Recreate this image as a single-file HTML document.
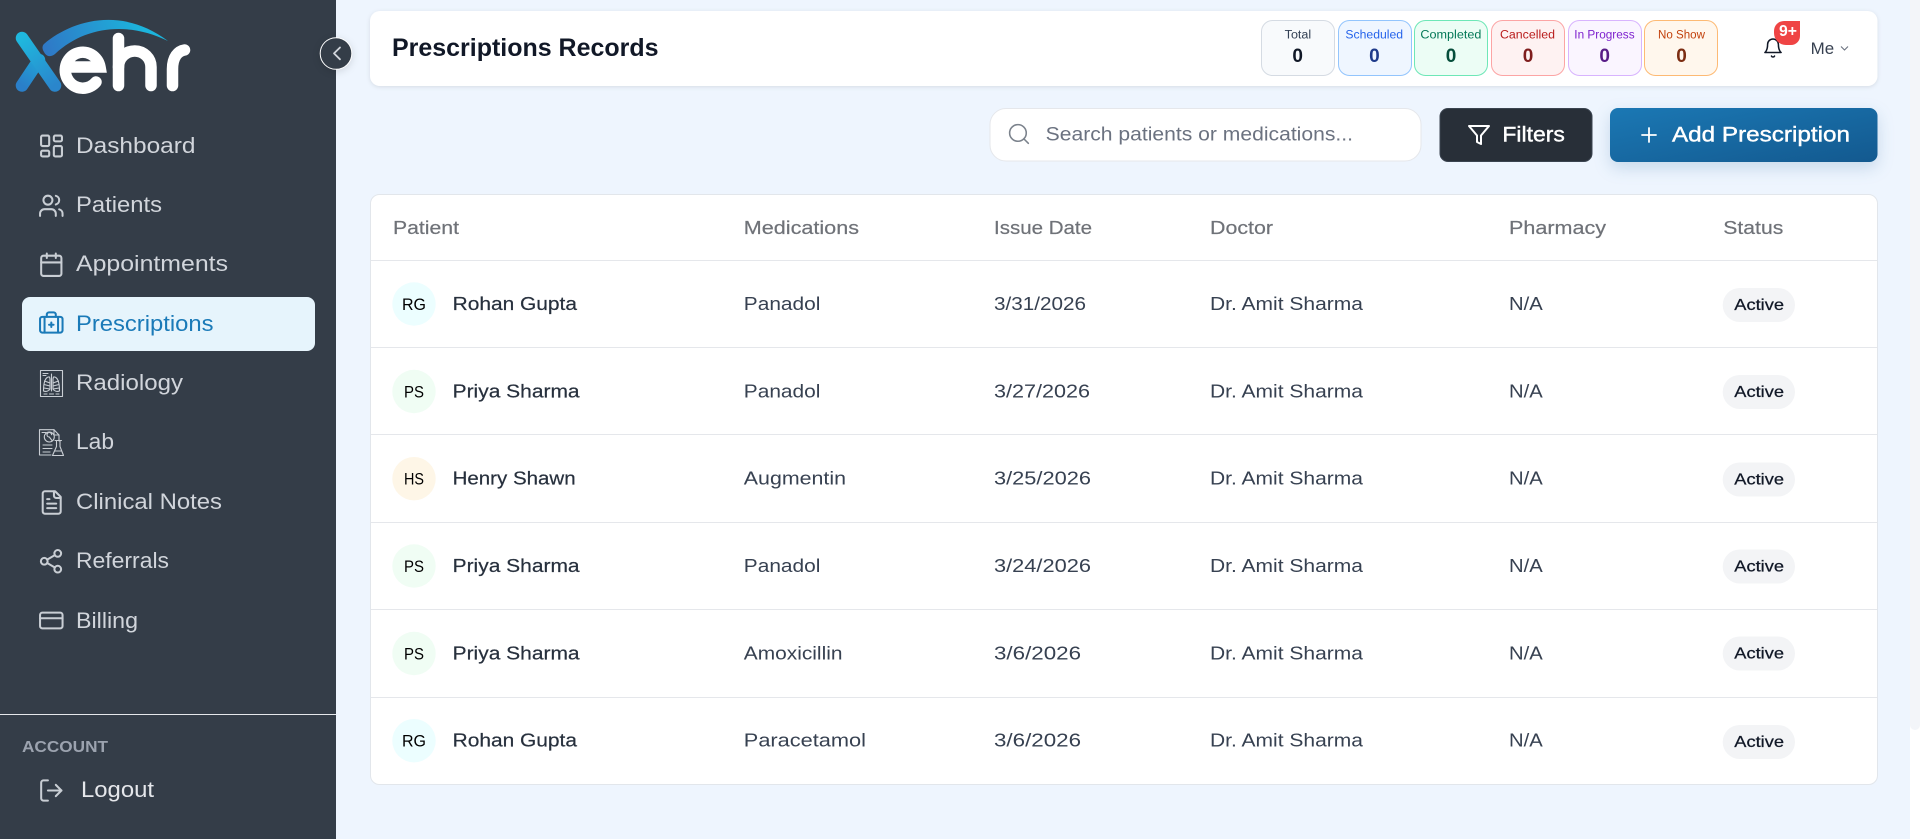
<!DOCTYPE html>
<html lang="en">
<head>
<meta charset="utf-8">
<title>Prescriptions Records</title>
<style>
html,body{margin:0;padding:0;width:1920px;height:839px;overflow:hidden;background:#EEF5FE}
svg{display:block}
text{font-family:"Liberation Sans",sans-serif}
.nav{font-size:22px;fill:#D1D5DB}
.th{font-size:18.5px;fill:#6F7278;stroke:#6F7278;stroke-width:.2px}
.td{font-size:18.5px;fill:#374151}
.nm{font-size:18.5px;fill:#27303D;stroke:#27303D;stroke-width:.2px}
.av{font-size:16.5px;fill:#000}
.ac{font-size:16px;fill:#111827;stroke:#111827;stroke-width:.25px}
.lb{font-size:11.5px}
.vl{font-size:19px;font-weight:700;text-anchor:middle}
.ic{fill:none;stroke:#C9CED4;stroke-width:1.8;stroke-linecap:round;stroke-linejoin:round}
.th-i{fill:none;stroke:#C9CED4;stroke-width:1.1;stroke-linecap:round;stroke-linejoin:round}
</style>
</head>
<body>
<svg xmlns="http://www.w3.org/2000/svg" width="1920" height="839" viewBox="0 0 1920 839">
<defs>
<linearGradient id="gB" gradientUnits="userSpaceOnUse" x1="22" y1="85" x2="40" y2="60"><stop offset="0" stop-color="#2A7FC9"/><stop offset="1" stop-color="#20A5D8"/></linearGradient>
<linearGradient id="gC" gradientUnits="userSpaceOnUse" x1="22" y1="38" x2="55" y2="85"><stop offset="0" stop-color="#1FB8DE"/><stop offset="1" stop-color="#2A86CC"/></linearGradient>
<linearGradient id="gD" gradientUnits="userSpaceOnUse" x1="45" y1="50" x2="140" y2="20"><stop offset="0" stop-color="#2F78C6"/><stop offset="1" stop-color="#1CB4DC"/></linearGradient>
<linearGradient id="gE" x1="0" y1="0" x2="1" y2="1"><stop offset="0" stop-color="#1B78B4"/><stop offset="1" stop-color="#13598F"/></linearGradient>
</defs>

<!-- background -->
<rect width="1920" height="839" fill="#EEF5FE"/>
<rect x="1910" width="10" height="839" fill="#fff"/>
<path d="M1910 0H1920V725a5 5 0 0 1-5 5a5 5 0 0 1-5-5Z" fill="#F3F5F9"/>

<!-- sidebar -->
<rect width="336" height="839" fill="#343D48"/>
<rect y="714" width="336" height="1" fill="#E5E7EB"/>

<!-- logo -->
<path d="M22 85.500 L39 60" stroke="url(#gB)" stroke-width="12.500" stroke-linecap="round" fill="none"/>
<path d="M22 38 L55 85.500" stroke="url(#gC)" stroke-width="12.500" stroke-linecap="round" fill="none"/>
<path d="M44 44C72 20 122 6 168 41C130 22 86 25 55 54C50 58 46 56 44 52C42 49 42 46 44 44Z" fill="url(#gD)"/>
<g fill="none" stroke="#fff" stroke-width="11.500" stroke-linecap="round">
<path d="M68 67H100A17.500 18 0 1 0 96 82"/>
<path d="M118.500 38.500V85.500"/>
<path d="M118.500 67A16.200 16 0 0 1 151 67V85.500"/>
<path d="M172.500 85.500V69C172.500 57 178 51 184.500 50"/>
</g>

<!-- toggle -->
<circle cx="336" cy="53.500" r="15.800" fill="#343D48" stroke="#fff" stroke-width="1" style="filter:drop-shadow(0 2px 4px rgba(0,0,0,.12))"/>
<polyline points="340,47.500 334,53.400 340,59.300" fill="none" stroke="#D1D5DB" stroke-width="1.800" stroke-linecap="round" stroke-linejoin="round"/>

<!-- nav active -->
<rect x="22" y="297" width="293" height="54" rx="8" fill="#E6F4FC"/>

<!-- nav icons -->
<g class="ic" transform="translate(37.600,132.100) scale(1.160)"><rect x="3" y="3" width="7" height="9" rx="1.300"/><rect x="14" y="3" width="7" height="5" rx="1.300"/><rect x="14" y="12" width="7" height="9" rx="1.300"/><rect x="3" y="16" width="7" height="5" rx="1.300"/></g>
<g class="ic" transform="translate(37.800,192.300) scale(1.125)"><path d="M16 21v-2a4 4 0 0 0-4-4H6a4 4 0 0 0-4 4v2"/><circle cx="9" cy="7" r="4"/><path d="M22 21v-2a4 4 0 0 0-3-3.870"/><path d="M16 3.130a4 4 0 0 1 0 7.750"/></g>
<g class="ic" transform="translate(37.800,251.200) scale(1.125)"><path d="M8 2v4"/><path d="M16 2v4"/><rect x="3" y="4" width="18" height="18" rx="2"/><path d="M3 10h18"/></g>
<g fill="none" stroke="#1A7AB8" stroke-width="1.800" stroke-linecap="round" stroke-linejoin="round" transform="translate(37.800,310.100) scale(1.125)"><path d="M12 11v4"/><path d="M14 13h-4"/><path d="M16 6V4a2 2 0 0 0-2-2h-4a2 2 0 0 0-2 2v2"/><path d="M18 6v14"/><path d="M6 6v14"/><rect x="2" y="6" width="20" height="14" rx="2"/></g>

<!-- radiology -->
<g class="th-i">
<rect x="40.500" y="370.500" width="22" height="26"/>
<path d="M43 373.500H48M43 375.500H46"/>
<path d="M51.500 374V391"/>
<path d="M49.500 377C46 376.500 43.500 381 43.500 391C46 392 49 391 50 389V379Z"/>
<path d="M53.500 377C57 376.500 59.500 381 59.500 391C57 392 54 391 53 389V379Z"/>
<path d="M44.500 381L50 383M44 384.500L50 386M43.800 388L50 389M58.500 381L53 383M59 384.500L53 386M59.200 388L53 389"/>
<path d="M44 394H47M49.500 394H53.500M56 394H59"/>
</g>

<!-- lab -->
<g class="th-i" stroke-width="1.300">
<path d="M59 441V435L54 429.700H39.500V455H51"/>
<path d="M54 429.700V435H59"/>
<path d="M42 432.500H46"/>
<circle cx="49.300" cy="437" r="5"/>
<path d="M49.300 437A2.300 2.300 0 1 1 51.600 434.700M49.300 437L52 440.500"/>
<path d="M43 445H52M43 448.500H52M43 452H50"/>
<path d="M55 440.500H61.500M56.500 440.500V446.500L52.500 455.500H63.500L60 446.500V440.500"/>
<path d="M54.500 451H61.500"/>
</g>

<g class="ic" transform="translate(38.200,489) scale(1.125)"><path d="M15 2H6a2 2 0 0 0-2 2v16a2 2 0 0 0 2 2h12a2 2 0 0 0 2-2V7Z"/><path d="M14 2v4a2 2 0 0 0 2 2h4"/><path d="M10 9H8"/><path d="M16 13H8"/><path d="M16 17H8"/></g>
<g class="ic" transform="translate(37.500,547.800) scale(1.125)"><circle cx="18" cy="5" r="3"/><circle cx="6" cy="12" r="3"/><circle cx="18" cy="19" r="3"/><line x1="8.590" y1="13.510" x2="15.420" y2="17.490"/><line x1="15.410" y1="6.510" x2="8.590" y2="10.490"/></g>
<g class="ic" transform="translate(37.800,607) scale(1.125)"><rect x="2" y="5" width="20" height="14" rx="2"/><line x1="2" y1="10" x2="22" y2="10"/></g>
<g class="ic" transform="translate(37.800,777) scale(1.125)"><path d="M9 21H5a2 2 0 0 1-2-2V5a2 2 0 0 1 2-2h4"/><polyline points="16 17 21 12 16 7"/><line x1="21" y1="12" x2="9" y2="12"/></g>

<!-- nav text -->
<text class="nav" x="76" y="153" textLength="119.500" lengthAdjust="spacingAndGlyphs">Dashboard</text>
<text class="nav" x="76" y="212" textLength="86" lengthAdjust="spacingAndGlyphs">Patients</text>
<text class="nav" x="76" y="271" textLength="152" lengthAdjust="spacingAndGlyphs">Appointments</text>
<text class="nav" x="76" y="331" textLength="137.500" lengthAdjust="spacingAndGlyphs" style="fill:#1A7AB8">Prescriptions</text>
<text class="nav" x="76" y="390" textLength="107" lengthAdjust="spacingAndGlyphs">Radiology</text>
<text class="nav" x="76" y="449" textLength="38" lengthAdjust="spacingAndGlyphs">Lab</text>
<text class="nav" x="76" y="509" textLength="146" lengthAdjust="spacingAndGlyphs">Clinical Notes</text>
<text class="nav" x="76" y="568" textLength="93" lengthAdjust="spacingAndGlyphs">Referrals</text>
<text class="nav" x="76" y="628" textLength="62" lengthAdjust="spacingAndGlyphs">Billing</text>
<text x="22" y="752" font-size="15.500" font-weight="700" fill="#9CA3AF" textLength="86" lengthAdjust="spacingAndGlyphs">ACCOUNT</text>
<text class="nav" x="81" y="797" textLength="73" lengthAdjust="spacingAndGlyphs" style="fill:#E5E7EB">Logout</text>

<!-- header card -->
<rect x="370" y="11" width="1507.500" height="75" rx="10" fill="#fff" style="filter:drop-shadow(0 1px 2px rgba(0,0,0,.1))"/>
<text x="392" y="56" font-size="25" font-weight="700" fill="#111827" textLength="266.500" lengthAdjust="spacingAndGlyphs">Prescriptions Records</text>

<!-- stat pills -->
<rect x="1261.500" y="20.500" width="73" height="55" rx="11" fill="#F8FAFC" stroke="#D5DBE3"/>
<rect x="1338.500" y="20.500" width="73" height="55" rx="11" fill="#EFF6FF" stroke="#93C5FD"/>
<rect x="1414.500" y="20.500" width="73" height="55" rx="11" fill="#ECFDF5" stroke="#6EE7B7"/>
<rect x="1491.500" y="20.500" width="73" height="55" rx="11" fill="#FEF2F2" stroke="#FCA5A5"/>
<rect x="1568.500" y="20.500" width="73" height="55" rx="11" fill="#FAF5FF" stroke="#D8B4FE"/>
<rect x="1644.500" y="20.500" width="73" height="55" rx="11" fill="#FFF7ED" stroke="#FDBA74"/>
<g class="lb">
<text class="lb" x="1284.700" y="38.500" fill="#334155" textLength="26.500" lengthAdjust="spacingAndGlyphs">Total</text>
<text class="lb" x="1345.400" y="38.500" fill="#2563EB" textLength="57.700" lengthAdjust="spacingAndGlyphs">Scheduled</text>
<text class="lb" x="1420.400" y="38.500" fill="#047857" textLength="61" lengthAdjust="spacingAndGlyphs">Completed</text>
<text class="lb" x="1500" y="38.500" fill="#B91C1C" textLength="55" lengthAdjust="spacingAndGlyphs">Cancelled</text>
<text class="lb" x="1574.300" y="38.500" fill="#7E22CE" textLength="60.300" lengthAdjust="spacingAndGlyphs">In Progress</text>
<text class="lb" x="1658" y="38.500" fill="#C2410C" textLength="47" lengthAdjust="spacingAndGlyphs">No Show</text>
</g>
<text class="vl" x="1297.700" y="62" fill="#111827">0</text>
<text class="vl" x="1374.400" y="62" fill="#1E3A8A">0</text>
<text class="vl" x="1451" y="62" fill="#064E3B">0</text>
<text class="vl" x="1528" y="62" fill="#7F1D1D">0</text>
<text class="vl" x="1604.700" y="62" fill="#581C87">0</text>
<text class="vl" x="1681.500" y="62" fill="#7C2D12">0</text>

<!-- bell -->
<g fill="none" stroke="#111827" stroke-width="1.700" stroke-linecap="round" stroke-linejoin="round" transform="translate(1762.200,37.200) scale(.9)"><path d="M6 8a6 6 0 0 1 12 0c0 7 3 9 3 9H3s3-2 3-9"/><path d="M10.300 21a1.940 1.940 0 0 0 3.400 0"/></g>
<path d="M1784 21H1800V36A9 9 0 0 1 1791 45H1786A12 12 0 0 1 1774 33V31A10 10 0 0 1 1784 21Z" fill="#EF4444"/>
<text x="1779" y="36" font-size="15.500" font-weight="700" fill="#fff" textLength="18" lengthAdjust="spacingAndGlyphs">9+</text>
<text x="1810.700" y="54" font-size="16.500" fill="#374151" textLength="23.500" lengthAdjust="spacingAndGlyphs">Me</text>
<polyline points="1841,46.500 1844.500,50 1848,46.500" fill="none" stroke="#6B7280" stroke-width="1.100"/>

<!-- search -->
<rect x="990" y="108.500" width="431" height="52.500" rx="16" fill="#fff" stroke="#E5E7EB"/>
<g fill="none" stroke="#7B828C" stroke-width="1.500" stroke-linecap="round" stroke-linejoin="round" transform="translate(1006.500,121.500) scale(1.040)"><circle cx="11" cy="11" r="8"/><path d="m21 21-4.300-4.300"/></g>
<text x="1045.700" y="140.500" font-size="19" fill="#6B7280" textLength="307.300" lengthAdjust="spacingAndGlyphs">Search patients or medications...</text>

<!-- filters -->
<rect x="1440" y="108.500" width="152" height="53" rx="8" fill="#282F38" stroke="#3B4450"/>
<g fill="none" stroke="#fff" stroke-width="2" stroke-linecap="round" stroke-linejoin="round" transform="translate(1467,123)"><polygon points="22 3 2 3 10 12.460 10 19 14 21 14 12.460 22 3"/></g>
<text x="1502.400" y="141.700" font-size="21" fill="#fff" stroke="#fff" stroke-width=".4" textLength="62.400" lengthAdjust="spacingAndGlyphs">Filters</text>

<!-- add prescription -->
<rect x="1610" y="108" width="267.500" height="54" rx="8" fill="url(#gE)" style="filter:drop-shadow(0 6px 8px rgba(19,89,143,.18))"/>
<g fill="none" stroke="#fff" stroke-width="1.800" stroke-linecap="round" transform="translate(1637,123)"><path d="M5 12h14"/><path d="M12 5v14"/></g>
<text x="1672" y="141.700" font-size="21" fill="#fff" stroke="#fff" stroke-width=".4" textLength="178" lengthAdjust="spacingAndGlyphs">Add Prescription</text>

<!-- table -->
<rect x="370.500" y="194.500" width="1507" height="590" rx="9" fill="#fff" stroke="#E2E6EB"/>
<g fill="#E5E7EB">
<rect x="371" y="260" width="1506" height="1"/>
<rect x="371" y="347" width="1506" height="1"/>
<rect x="371" y="434" width="1506" height="1"/>
<rect x="371" y="522" width="1506" height="1"/>
<rect x="371" y="609" width="1506" height="1"/>
<rect x="371" y="697" width="1506" height="1"/>
</g>
<text class="th" x="393" y="234" textLength="66" lengthAdjust="spacingAndGlyphs">Patient</text>
<text class="th" x="743.800" y="234" textLength="115.200" lengthAdjust="spacingAndGlyphs">Medications</text>
<text class="th" x="994" y="234" textLength="98" lengthAdjust="spacingAndGlyphs">Issue Date</text>
<text class="th" x="1210" y="234" textLength="63" lengthAdjust="spacingAndGlyphs">Doctor</text>
<text class="th" x="1509" y="234" textLength="97" lengthAdjust="spacingAndGlyphs">Pharmacy</text>
<text class="th" x="1723.300" y="234" textLength="60" lengthAdjust="spacingAndGlyphs">Status</text>

<!-- row 1 -->
<circle cx="414" cy="304" r="21.700" fill="#ECFEFF"/>
<text class="av" x="402" y="310" textLength="24" lengthAdjust="spacingAndGlyphs">RG</text>
<text class="nm" x="452.600" y="310" textLength="124.400" lengthAdjust="spacingAndGlyphs">Rohan Gupta</text>
<text class="td" x="743.800" y="310" textLength="76.600" lengthAdjust="spacingAndGlyphs">Panadol</text>
<text class="td" x="994" y="310" textLength="92" lengthAdjust="spacingAndGlyphs">3/31/2026</text>
<text class="td" x="1210" y="310" textLength="153" lengthAdjust="spacingAndGlyphs">Dr. Amit Sharma</text>
<text class="td" x="1509" y="310" textLength="33.700" lengthAdjust="spacingAndGlyphs">N/A</text>
<rect x="1722.700" y="288" width="72.300" height="34" rx="17" fill="#F3F4F6"/>
<text class="ac" x="1734.300" y="310" textLength="49.700" lengthAdjust="spacingAndGlyphs">Active</text>

<!-- row 2 -->
<circle cx="414" cy="391.500" r="21.700" fill="#F0FDF4"/>
<text class="av" x="404" y="397.500" textLength="20" lengthAdjust="spacingAndGlyphs">PS</text>
<text class="nm" x="452.600" y="397.500" textLength="127" lengthAdjust="spacingAndGlyphs">Priya Sharma</text>
<text class="td" x="743.800" y="397.500" textLength="76.600" lengthAdjust="spacingAndGlyphs">Panadol</text>
<text class="td" x="994" y="397.500" textLength="96" lengthAdjust="spacingAndGlyphs">3/27/2026</text>
<text class="td" x="1210" y="397.500" textLength="153" lengthAdjust="spacingAndGlyphs">Dr. Amit Sharma</text>
<text class="td" x="1509" y="397.500" textLength="33.700" lengthAdjust="spacingAndGlyphs">N/A</text>
<rect x="1722.700" y="375" width="72.300" height="34" rx="17" fill="#F3F4F6"/>
<text class="ac" x="1734.300" y="397" textLength="49.700" lengthAdjust="spacingAndGlyphs">Active</text>

<!-- row 3 -->
<circle cx="414" cy="478.700" r="21.700" fill="#FEF6E7"/>
<text class="av" x="404" y="484.700" textLength="20" lengthAdjust="spacingAndGlyphs">HS</text>
<text class="nm" x="452.600" y="484.700" textLength="123" lengthAdjust="spacingAndGlyphs">Henry Shawn</text>
<text class="td" x="743.800" y="484.700" textLength="102.200" lengthAdjust="spacingAndGlyphs">Augmentin</text>
<text class="td" x="994" y="484.700" textLength="97" lengthAdjust="spacingAndGlyphs">3/25/2026</text>
<text class="td" x="1210" y="484.700" textLength="153" lengthAdjust="spacingAndGlyphs">Dr. Amit Sharma</text>
<text class="td" x="1509" y="484.700" textLength="33.700" lengthAdjust="spacingAndGlyphs">N/A</text>
<rect x="1722.700" y="462.500" width="72.300" height="34" rx="17" fill="#F3F4F6"/>
<text class="ac" x="1734.300" y="484.500" textLength="49.700" lengthAdjust="spacingAndGlyphs">Active</text>

<!-- row 4 -->
<circle cx="414" cy="566" r="21.700" fill="#F0FDF4"/>
<text class="av" x="404" y="572" textLength="20" lengthAdjust="spacingAndGlyphs">PS</text>
<text class="nm" x="452.600" y="572" textLength="127" lengthAdjust="spacingAndGlyphs">Priya Sharma</text>
<text class="td" x="743.800" y="572" textLength="76.600" lengthAdjust="spacingAndGlyphs">Panadol</text>
<text class="td" x="994" y="572" textLength="97" lengthAdjust="spacingAndGlyphs">3/24/2026</text>
<text class="td" x="1210" y="572" textLength="153" lengthAdjust="spacingAndGlyphs">Dr. Amit Sharma</text>
<text class="td" x="1509" y="572" textLength="33.700" lengthAdjust="spacingAndGlyphs">N/A</text>
<rect x="1722.700" y="549.500" width="72.300" height="34" rx="17" fill="#F3F4F6"/>
<text class="ac" x="1734.300" y="571.500" textLength="49.700" lengthAdjust="spacingAndGlyphs">Active</text>

<!-- row 5 -->
<circle cx="414" cy="653.500" r="21.700" fill="#F0FDF4"/>
<text class="av" x="404" y="659.500" textLength="20" lengthAdjust="spacingAndGlyphs">PS</text>
<text class="nm" x="452.600" y="659.500" textLength="127" lengthAdjust="spacingAndGlyphs">Priya Sharma</text>
<text class="td" x="743.800" y="659.500" textLength="98.700" lengthAdjust="spacingAndGlyphs">Amoxicillin</text>
<text class="td" x="994" y="659.500" textLength="87" lengthAdjust="spacingAndGlyphs">3/6/2026</text>
<text class="td" x="1210" y="659.500" textLength="153" lengthAdjust="spacingAndGlyphs">Dr. Amit Sharma</text>
<text class="td" x="1509" y="659.500" textLength="33.700" lengthAdjust="spacingAndGlyphs">N/A</text>
<rect x="1722.700" y="636.500" width="72.300" height="34" rx="17" fill="#F3F4F6"/>
<text class="ac" x="1734.300" y="658.500" textLength="49.700" lengthAdjust="spacingAndGlyphs">Active</text>

<!-- row 6 -->
<circle cx="414" cy="740.700" r="21.700" fill="#ECFEFF"/>
<text class="av" x="402" y="746.700" textLength="24" lengthAdjust="spacingAndGlyphs">RG</text>
<text class="nm" x="452.600" y="746.700" textLength="124.400" lengthAdjust="spacingAndGlyphs">Rohan Gupta</text>
<text class="td" x="743.800" y="746.700" textLength="122.200" lengthAdjust="spacingAndGlyphs">Paracetamol</text>
<text class="td" x="994" y="746.700" textLength="87" lengthAdjust="spacingAndGlyphs">3/6/2026</text>
<text class="td" x="1210" y="746.700" textLength="153" lengthAdjust="spacingAndGlyphs">Dr. Amit Sharma</text>
<text class="td" x="1509" y="746.700" textLength="33.700" lengthAdjust="spacingAndGlyphs">N/A</text>
<rect x="1722.700" y="725" width="72.300" height="34" rx="17" fill="#F3F4F6"/>
<text class="ac" x="1734.300" y="747" textLength="49.700" lengthAdjust="spacingAndGlyphs">Active</text>
</svg>
</body>
</html>
